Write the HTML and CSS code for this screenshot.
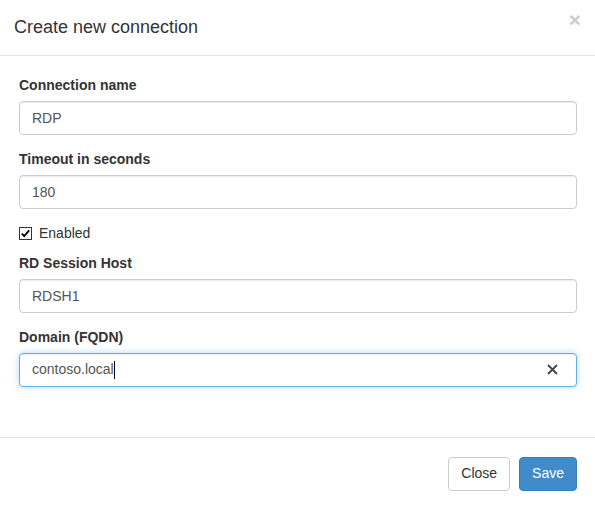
FILE: index.html
```html
<!DOCTYPE html>
<html>
<head>
<meta charset="utf-8">
<link rel="stylesheet" href="styles.css">
</head>
<body>
<div class="modal">
  <div class="modal-header">
    <h4 class="modal-title">Create new connection</h4>
    <button class="close-btn" type="button">×</button>
  </div>
  <div class="modal-body">
    <div class="form-group">
      <label class="control-label">Connection name</label>
      <input class="form-control" type="text" value="RDP">
    </div>
    <div class="form-group">
      <label class="control-label">Timeout in seconds</label>
      <input class="form-control" type="text" value="180">
    </div>
    <div class="checkbox">
      <label>
        <svg class="check-box" width="13" height="13" viewBox="0 0 13 13"><rect x="0.5" y="0.5" width="12" height="12" fill="#fff" stroke="#333"/><path d="M2.8 6.6L5.2 9.2L10.2 3.4" stroke="#000" stroke-width="1.8" fill="none"/></svg>
        Enabled
      </label>
    </div>
    <div class="form-group">
      <label class="control-label">RD Session Host</label>
      <input class="form-control" type="text" value="RDSH1">
    </div>
    <div class="form-group">
      <label class="control-label">Domain (FQDN)</label>
      <div class="form-control focused">
        <span class="value">contoso.local</span><span class="caret"></span>
        <span class="clear">
          <svg width="11" height="11" viewBox="0 0 11 11"><path d="M1 1L10 10M10 1L1 10" stroke="#444" stroke-width="1.8" fill="none"/></svg>
        </span>
      </div>
    </div>
  </div>
  <div class="modal-footer">
    <button class="btn btn-default" type="button">Close</button>
    <button class="btn btn-primary" type="button">Save</button>
  </div>
</div>
</body>
</html>
```

FILE: styles.css
```css
* { box-sizing: border-box; }
html, body { margin: 0; padding: 0; background: #fff; }
body {
  font-family: "Liberation Sans", Arial, Helvetica, sans-serif;
  font-size: 14px;
  line-height: 1.42857;
  color: #333;
}
.modal { width: 595px; }
.modal-header {
  display: flex;
  align-items: flex-start;
  justify-content: space-between;
  padding: 15px 14px 15px 14px;
  border-bottom: 1px solid #e5e5e5;
  height: 56px;
}
.modal-title {
  margin: 0;
  font-size: 18px;
  font-weight: normal;
  line-height: 1.42857;
  color: #333;
}
.close-btn {
  border: 0;
  background: none;
  padding: 0;
  margin-top: -6px;
  font-family: "Liberation Sans", Arial, sans-serif;
  font-size: 21px;
  font-weight: bold;
  line-height: 1;
  color: #000;
  opacity: 0.2;
  text-shadow: 0 1px 0 #fff;
}
.modal-body {
  padding: 20px 18px 35px 19px;
}
.form-group { margin-bottom: 15px; }
.control-label {
  display: block;
  font-weight: bold;
  margin-bottom: 5px;
}
.form-control {
  display: block;
  width: 100%;
  height: 34px;
  padding: 6px 12px;
  font-family: inherit;
  font-size: 14px;
  line-height: 1.42857;
  color: #555;
  background: #fff;
  border: 1px solid #ccc;
  border-radius: 4px;
  box-shadow: inset 0 1px 1px rgba(0,0,0,.075);
  outline: none;
}
.form-control.focused {
  display: flex;
  align-items: center;
  border-color: #66afe9;
  box-shadow: inset 0 1px 1px rgba(0,0,0,.075), 0 0 6px rgba(102,175,233,.5);
}
.caret {
  display: inline-block;
  width: 1px;
  height: 18px;
  background: #000;
}
.clear {
  margin-left: auto;
  margin-right: 6px;
  display: flex;
  align-items: center;
}
.checkbox {
  margin: 0 0 10px;
  min-height: 20px;
}
.checkbox label {
  display: flex;
  align-items: center;
  font-weight: normal;
  cursor: pointer;
}
.check-box {
  margin: 0 7px 0 0;
  flex: none;
}
.modal-footer {
  display: flex;
  justify-content: flex-end;
  gap: 9px;
  padding: 19px 18px 18px 19px;
  border-top: 1px solid #e5e5e5;
}
.btn {
  display: inline-block;
  height: 34px;
  padding: 6px 12px;
  font-family: inherit;
  font-size: 14px;
  line-height: 1.42857;
  border: 1px solid transparent;
  border-radius: 4px;
  cursor: pointer;
}
.btn-default { color: #333; background: #fff; border-color: #ccc; }
.btn-primary { color: #fff; background: #428bca; border-color: #357ebd; }
```
